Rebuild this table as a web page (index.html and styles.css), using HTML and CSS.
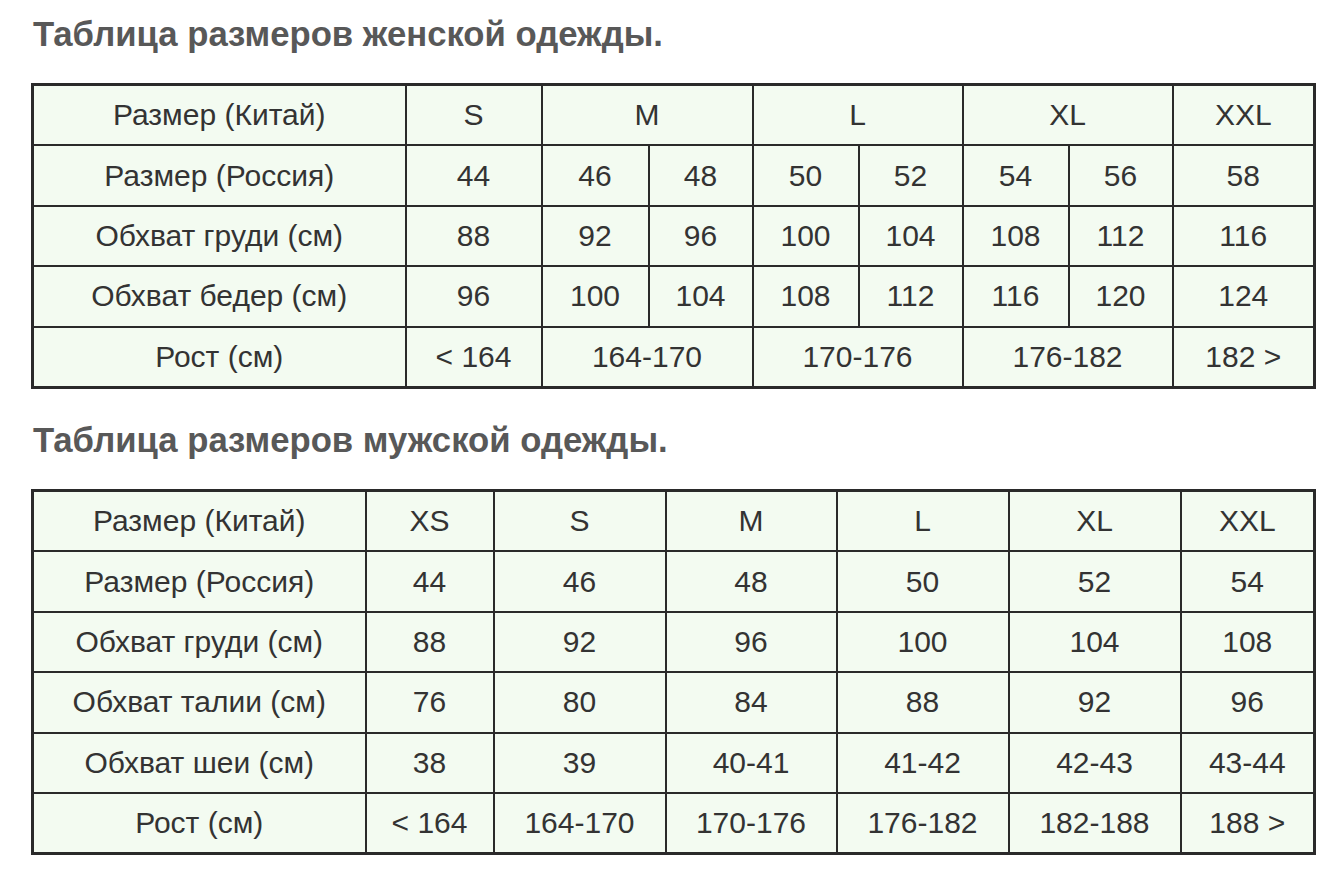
FILE: index.html
```html
<!DOCTYPE html>
<html lang="ru">
<head>
<meta charset="utf-8">
<title>Таблица размеров</title>
<link rel="stylesheet" href="styles.css">
</head>
<body>
<main class="page">
  <h2 class="title">Таблица размеров женской одежды.</h2>
  <table class="sizes sizes-women">
    <colgroup>
      <col class="c-label-w">
      <col class="c136"><col class="c107"><col class="c104"><col class="c106"><col class="c104"><col class="c106"><col class="c104"><col class="c142">
    </colgroup>
    <tr><td>Размер (Китай)</td><td>S</td><td colspan="2">M</td><td colspan="2">L</td><td colspan="2">XL</td><td>XXL</td></tr>
    <tr><td>Размер (Россия)</td><td>44</td><td>46</td><td>48</td><td>50</td><td>52</td><td>54</td><td>56</td><td>58</td></tr>
    <tr><td>Обхват груди (см)</td><td>88</td><td>92</td><td>96</td><td>100</td><td>104</td><td>108</td><td>112</td><td>116</td></tr>
    <tr><td>Обхват бедер (см)</td><td>96</td><td>100</td><td>104</td><td>108</td><td>112</td><td>116</td><td>120</td><td>124</td></tr>
    <tr><td>Рост (см)</td><td>&lt; 164</td><td colspan="2">164-170</td><td colspan="2">170-176</td><td colspan="2">176-182</td><td>182 &gt;</td></tr>
  </table>

  <h2 class="title title-men">Таблица размеров мужской одежды.</h2>
  <table class="sizes sizes-men">
    <colgroup>
      <col class="c-label-m">
      <col class="c128"><col class="c172"><col class="c171"><col class="c172"><col class="c172"><col class="c134">
    </colgroup>
    <tr><td>Размер (Китай)</td><td>XS</td><td>S</td><td>M</td><td>L</td><td>XL</td><td>XXL</td></tr>
    <tr><td>Размер (Россия)</td><td>44</td><td>46</td><td>48</td><td>50</td><td>52</td><td>54</td></tr>
    <tr><td>Обхват груди (см)</td><td>88</td><td>92</td><td>96</td><td>100</td><td>104</td><td>108</td></tr>
    <tr><td>Обхват талии (см)</td><td>76</td><td>80</td><td>84</td><td>88</td><td>92</td><td>96</td></tr>
    <tr><td>Обхват шеи (см)</td><td>38</td><td>39</td><td>40-41</td><td>41-42</td><td>42-43</td><td>43-44</td></tr>
    <tr><td>Рост (см)</td><td>&lt; 164</td><td>164-170</td><td>170-176</td><td>176-182</td><td>182-188</td><td>188 &gt;</td></tr>
  </table>
</main>
</body>
</html>
```

FILE: styles.css
```css
html, body {
  margin: 0;
  padding: 0;
  background: #ffffff;
}

.page {
  padding: 14px 0 0 31px;
  font-family: "Liberation Sans", Arial, sans-serif;
  color: #333333;
}

.title {
  margin: 0 0 0 2px;
  font-size: 34.7px;
  line-height: 40px;
  font-weight: bold;
  color: #585858;
}

.title-men {
  margin-top: 31px;
}

.sizes {
  width: 1282px;
  table-layout: fixed;
  border-collapse: collapse;
  border: 3px solid #2a2a2a;
  background: #f3fbf1;
  margin-top: 29px;
}

.sizes td {
  border: 2px solid #2a2a2a;
  height: 58.4px;
  padding: 0;
  text-align: center;
  vertical-align: middle;
  font-size: 30px;
  color: #333333;
  white-space: nowrap;
}

.c-label-w { width: 373px; }
.c-label-m { width: 333px; }
.c104 { width: 104px; }
.c106 { width: 106px; }
.c107 { width: 107px; }
.c128 { width: 128px; }
.c134 { width: 134px; }
.c136 { width: 136px; }
.c142 { width: 142px; }
.c171 { width: 171px; }
.c172 { width: 172px; }
```
